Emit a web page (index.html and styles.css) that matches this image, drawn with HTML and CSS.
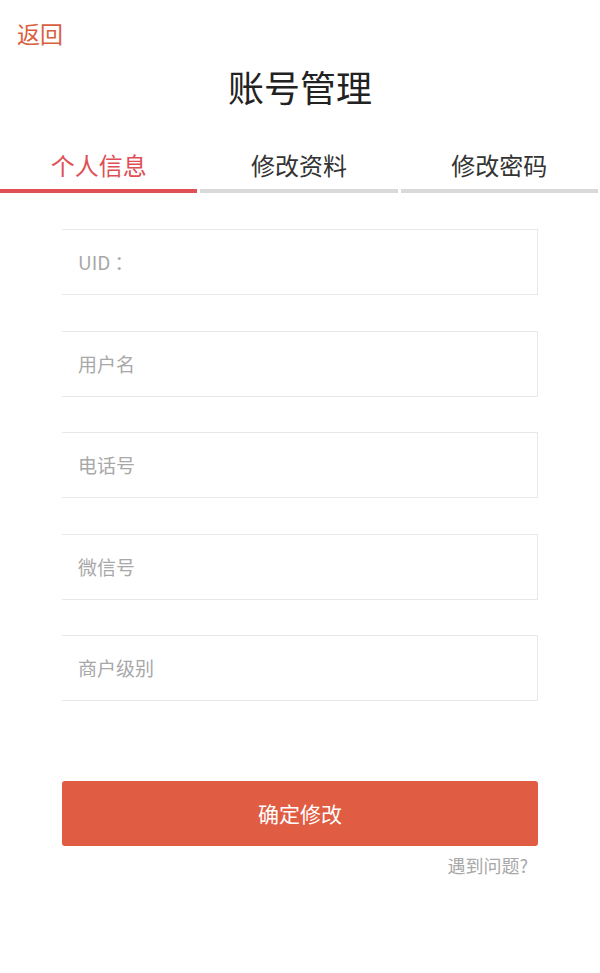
FILE: index.html
```html
<!DOCTYPE html>
<html lang="zh">
<head>
<meta charset="utf-8">
<link rel="stylesheet" href="styles.css">
</head>
<body>
<div class="page">
  <div class="topbar"><span class="back">返回</span></div>
  <h1 class="title">账号管理</h1>
  <div class="tabs">
    <div class="tab active">个人信息</div>
    <div class="tab">修改资料</div>
    <div class="tab">修改密码</div>
  </div>
  <form class="form">
    <div class="field">UID ：</div>
    <div class="field">用户名</div>
    <div class="field">电话号</div>
    <div class="field">微信号</div>
    <div class="field">商户级别</div>
    <div class="submit">确定修改</div>
    <div class="help">遇到问题?</div>
  </form>
</div>
</body>
</html>
```

FILE: styles.css
```css
* { box-sizing: border-box; }
html, body { margin: 0; padding: 0; background: #fff; }
body {
  font-family: "Noto Sans CJK SC", "Noto Sans", sans-serif;
  width: 600px;
  height: 973px;
  overflow: hidden;
}
.page { display: flex; flex-direction: column; }
.topbar { height: 66px; padding: 14px 0 0 17px; }
.back { color: #d9603f; font-size: 23px; line-height: 38px; }
.title {
  margin: 0;
  text-align: center;
  font-weight: 400;
  font-size: 36px;
  line-height: 40px;
  color: #222;
}
.tabs {
  display: flex;
  gap: 3px;
  margin-top: 40px;
  padding-right: 2px;
}
.tab {
  flex: 1;
  text-align: center;
  font-size: 24px;
  line-height: 38px;
  color: #333;
  padding-bottom: 5px;
  border-bottom: 4px solid #d9d9d9;
}
.tab.active { color: #e04f55; border-bottom-color: #e04f55; }
.form {
  margin: 36px 62px 0 62px;
  display: flex;
  flex-direction: column;
}
.field {
  height: 66px;
  border-top: 1px solid #e8e8e8;
  border-bottom: 1px solid #e8e8e8;
  border-right: 1px solid #e8e8e8;
  padding-left: 16px;
  font-size: 19px;
  line-height: 64px;
  color: #a8a8a8;
  margin-bottom: 35.5px;
}
.submit {
  margin-top: 44.5px;
  height: 65px;
  background: #e05c42;
  border-radius: 3px;
  color: #fff;
  font-size: 21px;
  line-height: 65px;
  text-align: center;
}
.help {
  align-self: flex-end;
  margin-top: 6px;
  margin-right: 10px;
  color: #a8a8a8;
  font-size: 18px;
  line-height: 26px;
}
```
